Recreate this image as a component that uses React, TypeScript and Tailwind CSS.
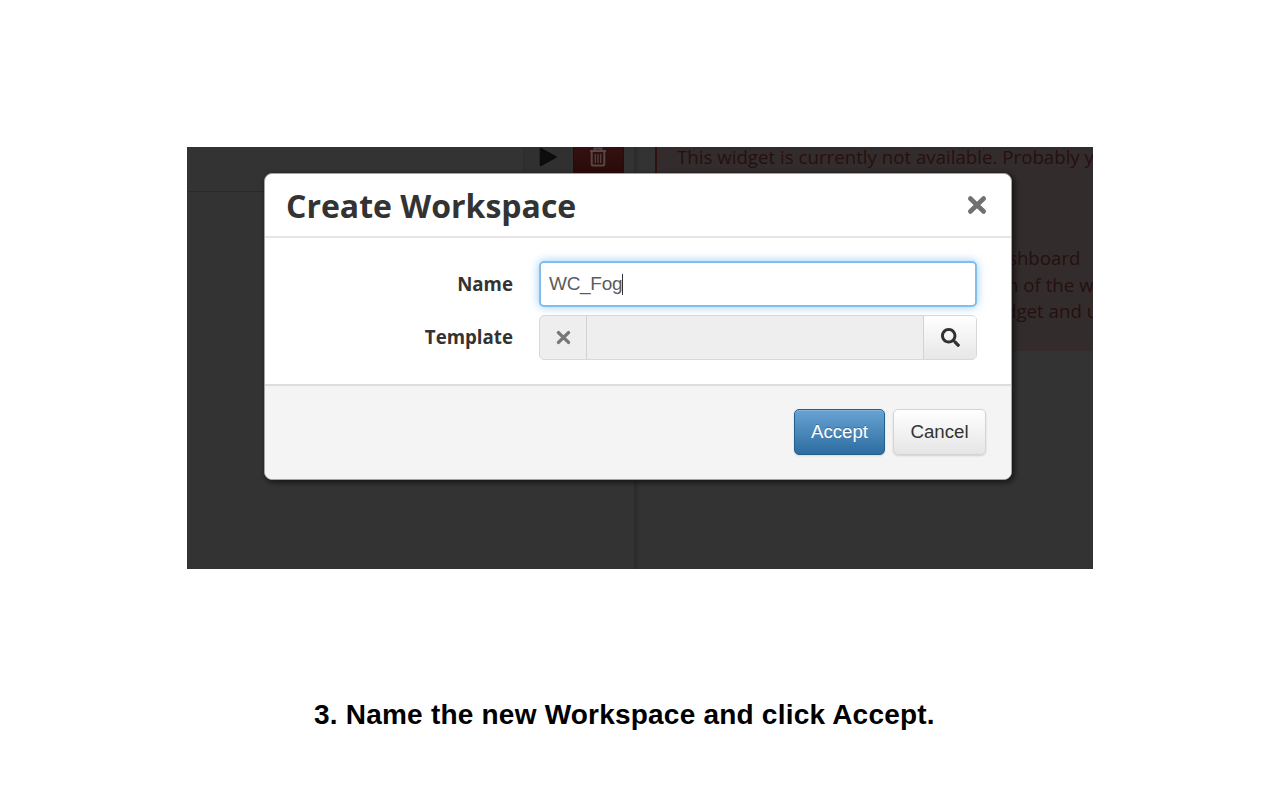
import { FaSearch } from "react-icons/fa";

function PlayIcon() {
  return (
    <svg width="19" height="20" viewBox="0 0 19 20" className="-ml-px text-[#0c0d0d]">
      <path d="M1.5 1.5v17L17 10z" fill="currentColor" stroke="currentColor" strokeWidth="1.6" strokeLinejoin="round" />
    </svg>
  );
}

function TrashIcon() {
  return (
    <svg width="18" height="20" viewBox="0 0 18 20" fill="none" stroke="#564645" strokeWidth="2" className="-ml-[2px]">
      <path d="M1 4h16M5.5 4V1.5h7V4M2.7 4.5V17q0 1.6 1.6 1.6h9.4q1.6 0 1.6-1.6V4.5" />
      <path d="M6.3 7v9M9 7v9M11.7 7v9" strokeWidth="1.2" />
    </svg>
  );
}

function CrossIcon({ size, color }: { size: number; color: string }) {
  return (
    <svg width={size} height={size} viewBox="0 0 20 20" fill="none" stroke={color} strokeWidth="4.6" strokeLinecap="round">
      <path d="M3.3 3.5l13.4 13M16.7 3.5l-13.4 13" />
    </svg>
  );
}

function Backdrop() {
  return (
    <div className="flex h-full w-full bg-[#333333]">
      <div className="h-full w-[447px]">
        <div className="flex h-[45px] border-b border-[#292929]">
          <div className="ml-[336px] flex h-[27px] w-[50px] justify-center border-l border-[#2d2d2d] bg-[#303030]">
            <PlayIcon />
          </div>
          <div className="flex h-[27px] w-[51px] justify-center border-x border-[#270c0b] bg-gradient-to-b from-[#341110] to-[#290a09]">
            <TrashIcon />
          </div>
        </div>
      </div>
      <div className="h-full w-[5px] bg-gradient-to-r from-[#2a2a2a] to-[#323232]" />
      <div className="min-w-0 flex-1 pl-[16px]">
        <div className="h-[204px] overflow-hidden border-b border-l-2 border-b-[#382a29] border-l-[#321010] bg-[#322d2c] font-['Open_Sans',sans-serif] text-[18.7px] leading-[27px] whitespace-nowrap text-[#270f10]">
          <p className="-mt-[4px] ml-[20px]">This widget is currently not available. Probably y</p>
          <p className="mt-[74px] ml-[351px]">shboard</p>
          <p className="ml-[350px]">n of the w</p>
          <p className="-mt-px ml-[348px]">dget and u</p>
        </div>
      </div>
    </div>
  );
}

function CreateWorkspaceDialog() {
  return (
    <section className="absolute top-[26px] left-[77px] flex h-[307px] w-[748px] flex-col overflow-hidden rounded-[8px] border border-[#a0a3a1] bg-white text-[#333333] shadow-[2px_2px_5px_1px_rgba(0,0,0,0.5)]">
      <header className="flex h-[64px] shrink-0 items-center justify-between border-b-2 border-[#e5e5e5] pr-[24px] pl-[21px]">
        <h1 className="pt-px font-['Open_Sans',sans-serif] text-[32px] leading-[40px] font-bold">Create Workspace</h1>
        <CrossIcon size={20} color="#707070" />
      </header>
      <div className="flex h-[146px] shrink-0 flex-col gap-[8px] pt-[23px] pr-[34px] font-['Open_Sans',sans-serif] text-[18.7px] font-bold">
        <div className="flex h-[46px]">
          <label htmlFor="name" className="mr-[26px] w-[248px] text-right leading-[46px]">Name</label>
          <div id="name" className="flex flex-1 items-center rounded-[5px] border-2 border-[#82bdf0] bg-white pl-[8px] font-['Liberation_Sans',sans-serif] text-[19px] font-normal tracking-[-0.3px] text-[#5c5c5c] shadow-[0_0_10px_rgba(82,168,236,0.6)]">
            <span className="pt-px">WC_Fog</span><i className="h-[21px] w-px bg-[#333333]" />
          </div>
        </div>
        <div className="flex h-[45px]">
          <span className="mr-[26px] w-[248px] text-right leading-[43px]">Template</span>
          <div className="flex flex-1 overflow-hidden rounded-[5px] border border-[#d8d8d8] bg-[#eeeeee]">
            <div className="flex w-[47px] items-center justify-center border-r border-[#d2d2d2] pb-px">
              <CrossIcon size={15} color="#777777" />
            </div>
            <div className="flex-1" />
            <button aria-label="Search" className="flex w-[53px] items-center justify-center border-l border-[#d2d2d2] bg-gradient-to-b from-white to-[#e7e7e7] pb-px">
              <FaSearch className="h-[19px] w-[19px] text-[#303030]" />
            </button>
          </div>
        </div>
      </div>
      <footer className="flex flex-1 justify-end gap-[8px] border-t-2 border-[#dddddd] bg-[#f4f4f4] pt-[23px] pr-[25px] font-['Liberation_Sans',sans-serif] text-[18.7px]">
        <button className="h-[46px] w-[91px] rounded-[5px] border border-[#255f8b] bg-gradient-to-b from-[#68a3d4] to-[#2c6da1] text-white shadow-[inset_0_1px_0_rgba(255,255,255,0.2),0_1px_2px_rgba(0,0,0,0.12)] [text-shadow:0_-1px_0_rgba(0,0,0,0.25)]">Accept</button>
        <button className="h-[46px] w-[93px] rounded-[5px] border border-[#d4d4d4] bg-gradient-to-b from-white to-[#e5e5e5] text-[#333333] shadow-[0_1px_2px_rgba(0,0,0,0.15)]">Cancel</button>
      </footer>
    </section>
  );
}

export default function App() {
  return (
    <main className="h-[805px] w-[1280px] overflow-hidden bg-white pt-[147px]">
      <div className="relative mx-auto h-[422px] w-[906px] overflow-hidden">
        <Backdrop />
        <CreateWorkspaceDialog />
      </div>
      <p className="mt-[130px] ml-[314px] font-['Liberation_Sans',sans-serif] text-[28px] leading-[32px] font-bold tracking-[0.215px] whitespace-nowrap text-black">3. Name the new Workspace and click Accept.</p>
    </main>
  );
}
